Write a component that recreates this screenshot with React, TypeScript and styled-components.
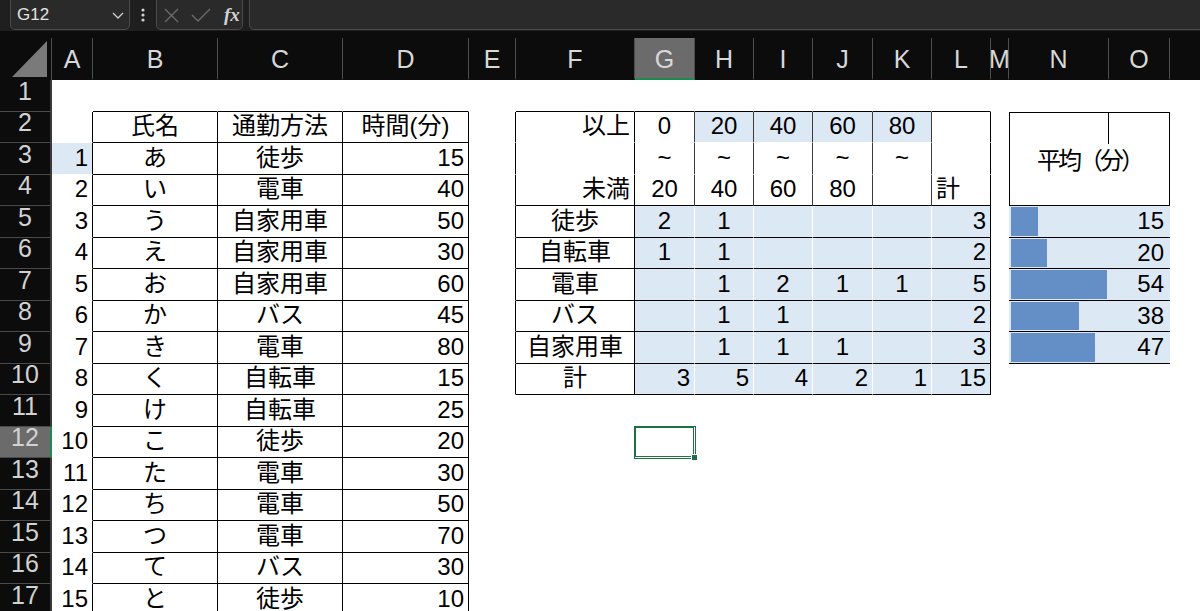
import React from 'react';
import styled, { createGlobalStyle } from 'styled-components';

type Align = 'left' | 'center' | 'right';

type CellSpec = {
    text?: string;
    align?: Align;
    fill?: boolean;
    right?: string;
    bottom?: string;
    selected?: boolean;
};

const FILL = '#dde8f5';
const BAR = '#638ec6';
const GREEN = '#1d7044';
const LINE = '#000';
const SOFT_LINE = '#3c3c3c';
const ROW_H = 31.5;

// P列は画面の右端で切れていて文字は見えない
const COLS = ['A', 'B', 'C', 'D', 'E', 'F', 'G', 'H', 'I', 'J', 'K', 'L', 'M', 'N', 'O', 'P'];
const WIDTHS = [41, 125, 125, 126, 47, 119, 60, 59, 59, 60, 59, 59, 18, 100, 61, 110];
const ROWS = Array.from({ length: 17 }, (_, i) => i + 1);

const names = ['あ', 'い', 'う', 'え', 'お', 'か', 'き', 'く', 'け', 'こ', 'た', 'ち', 'つ', 'て', 'と'];
const methods = ['徒歩', '電車', '自家用車', '自家用車', '自家用車', 'バス', '電車', '自転車', '自転車', '徒歩', '電車', '電車', '電車', 'バス', '徒歩'];
const times = [15, 40, 50, 30, 60, 45, 80, 15, 25, 20, 30, 50, 70, 30, 10];

const crossRows: { label: string; values: (number | null)[]; total: number }[] = [
    { label: '徒歩', values: [2, 1, null, null, null], total: 3 },
    { label: '自転車', values: [1, 1, null, null, null], total: 2 },
    { label: '電車', values: [null, 1, 2, 1, 1], total: 5 },
    { label: 'バス', values: [null, 1, 1, null, null], total: 2 },
    { label: '自家用車', values: [null, 1, 1, 1, null], total: 3 },
];
const colTotals = [3, 5, 4, 2, 1];
const averages = [15, 20, 54, 38, 47];

function buildCells() {
    const cells: Record<string, CellSpec> = {};
    const set = (key: string, spec: CellSpec) => {
        cells[key] = { ...cells[key], ...spec };
    };

    // 左の表
    ['B', 'C', 'D'].forEach(c => set(c + '1', { bottom: LINE }));
    for (let r = 2; r <= 17; r++) {
        set('A' + r, { right: LINE });
        ['B', 'C', 'D'].forEach(c => set(c + r, { right: LINE, bottom: LINE }));
    }
    set('B2', { text: '氏名', align: 'center' });
    set('C2', { text: '通勤方法', align: 'center' });
    set('D2', { text: '時間(分)', align: 'center' });
    names.forEach((n, i) => {
        const r = i + 3;
        set('A' + r, { text: String(i + 1), align: 'right' });
        set('B' + r, { text: n, align: 'center' });
        set('C' + r, { text: methods[i], align: 'center' });
        set('D' + r, { text: String(times[i]), align: 'right' });
    });
    set('A3', { fill: true });

    // 度数分布表
    const mid = ['F', 'G', 'H', 'I', 'J', 'K', 'L'];
    const bins = ['G', 'H', 'I', 'J', 'K'];
    mid.forEach(c => set(c + '1', { bottom: LINE }));
    for (let r = 2; r <= 10; r++) {
        set('E' + r, { right: LINE });
        set('F' + r, { right: LINE });
        set('L' + r, { right: LINE });
    }
    for (let r = 2; r <= 4; r++) bins.forEach(c => set(c + r, { right: SOFT_LINE }));
    mid.forEach(c => set(c + '4', { bottom: LINE }));
    set('F2', { text: '以上', align: 'right' });
    set('F4', { text: '未満', align: 'right' });
    ['0', '20', '40', '60', '80'].forEach((t, i) => set(bins[i] + '2', { text: t, align: 'center', fill: i > 0 }));
    bins.forEach(c => set(c + '3', { text: '~', align: 'center' }));
    ['20', '40', '60', '80'].forEach((t, i) => set(bins[i] + '4', { text: t, align: 'center' }));
    set('L4', { text: '計', align: 'left' });

    crossRows.forEach((row, i) => {
        const r = i + 5;
        mid.forEach(c => set(c + r, { bottom: LINE, fill: c !== 'F' }));
        set('F' + r, { text: row.label, align: 'center' });
        row.values.forEach((v, j) => {
            if (v !== null) set(bins[j] + r, { text: String(v), align: 'center' });
        });
        set('L' + r, { text: String(row.total), align: 'right' });
    });
    mid.forEach(c => set(c + '10', { bottom: LINE, fill: c !== 'F' }));
    set('F10', { text: '計', align: 'center' });
    colTotals.forEach((v, j) => set(bins[j] + '10', { text: String(v), align: 'right' }));
    set('L10', { text: '15', align: 'right' });

    set('G12', { selected: true });
    return cells;
}

const CELLS = buildCells();

const GlobalStyle = createGlobalStyle`
    html, body {
        margin: 0;
        padding: 0;
        background: #fff;
        overflow: hidden;
    }
    body {
        font-family: "Liberation Sans", "Noto Sans CJK JP", sans-serif;
    }
`;

const Page = styled.div`
    width: 1200px;
    height: 611px;
    overflow: hidden;
`;

const TopBar = styled.div`
    height: 31px;
    display: flex;
    align-items: flex-start;
    background: #1f1f1f;
    padding-left: 10px;
    overflow: hidden;
`;

const Box = styled.div`
    box-sizing: border-box;
    height: 35px;
    margin-top: -5px;
    padding-top: 5px;
    background: #2a2a2a;
    border: 1px solid #4a4a4a;
    border-radius: 0 0 5px 5px;
    display: flex;
    align-items: center;
`;

const NameBox = styled(Box)`
    width: 120px;
    justify-content: space-between;
    padding-left: 6px;
    padding-right: 5px;
    color: #e4e4e4;
    font-size: 17px;
`;

const Dots = styled.div`
    width: 26px;
    height: 30px;
    display: flex;
    align-items: center;
    justify-content: center;
`;

const FxBox = styled(Box)`
    width: 87px;
    padding-left: 7px;
    gap: 12px;
`;

const FxLabel = styled.span`
    font-family: "Liberation Serif", serif;
    font-style: italic;
    font-weight: bold;
    font-size: 19px;
    color: #d2d2d2;
    margin-left: 1px;
`;

const FormulaBox = styled(Box)`
    flex: 1;
    margin-left: 6px;
    margin-right: -10px;
`;

const Sheet = styled.div`
    display: grid;
    grid-template-columns: 52px ${WIDTHS.map(w => w + 'px').join(' ')};
    grid-template-rows: 42px repeat(17, ${ROW_H}px);
    background: #0c0c0c;
    padding-top: 7px;
`;

const Corner = styled.div`
    box-sizing: border-box;
    border-right: 1px solid #4e4e4e;
    display: flex;
    align-items: flex-end;
    justify-content: flex-end;
    padding: 0 4px 3px 0;
`;

const ColHead = styled.div<{ $active?: boolean }>`
    box-sizing: border-box;
    display: flex;
    align-items: center;
    justify-content: center;
    overflow: hidden;
    background: ${p => (p.$active ? '#6b6b6b' : '#0c0c0c')};
    border-right: 1px solid #4e4e4e;
    border-bottom: 2px solid ${p => (p.$active ? '#1f8a50' : '#0c0c0c')};
    color: #d8d8d8;
    font-size: 25px;
    padding-top: 2px;
`;

const RowHead = styled.div<{ $active?: boolean }>`
    box-sizing: border-box;
    display: flex;
    align-items: center;
    justify-content: center;
    padding-bottom: 8px;
    background: ${p => (p.$active ? '#6b6b6b' : '#0c0c0c')};
    border-bottom: 1px solid #4a4a4a;
    border-right: 2px solid ${p => (p.$active ? '#1f8a50' : '#3a3a3a')};
    color: #d2d2d2;
    font-size: 25px;
`;

const Cell = styled.div<{ $align: Align; $fill: boolean; $right?: string; $bottom?: string; $selected?: boolean }>`
    position: relative;
    box-sizing: border-box;
    display: flex;
    align-items: center;
    justify-content: ${p => (p.$align === 'left' ? 'flex-start' : p.$align === 'right' ? 'flex-end' : 'center')};
    padding: 0 4px 1px;
    background: ${p => (p.$fill ? FILL : '#fff')};
    border-right: 1px solid ${p => p.$right ?? (p.$fill ? '#fff' : 'transparent')};
    border-bottom: 1px solid ${p => p.$bottom ?? (p.$fill ? '#fff' : 'transparent')};
    font-size: 24px;
    line-height: 1;
    color: #000;
    white-space: nowrap;
    z-index: ${p => (p.$selected ? 2 : 'auto')};
    box-shadow: ${p => (p.$selected ? `inset 0 0 0 1px ${GREEN}, 0 0 0 1px ${GREEN}` : 'none')};

    ${p =>
        p.$selected &&
        `
        &::after {
            content: '';
            position: absolute;
            right: -4px;
            bottom: -4px;
            width: 5px;
            height: 5px;
            background: ${GREEN};
            border: 1px solid #fff;
        }
    `}
`;

const AverageHead = styled.div`
    grid-column: 15 / 17;
    grid-row: 3 / 6;
    position: relative;
    box-sizing: border-box;
    border: 1px solid ${LINE};
    background: #fff;
    display: flex;
    align-items: center;
    justify-content: center;
    font-size: 24px;
    letter-spacing: -3px;

    &::before {
        content: '';
        position: absolute;
        left: 98px;
        top: 0;
        width: 1px;
        height: ${ROW_H}px;
        background: ${LINE};
    }
`;

const BarCell = styled.div<{ $row: number }>`
    grid-column: 15 / 17;
    grid-row: ${p => p.$row + 1};
    box-sizing: border-box;
    display: grid;
    padding: 1px 6px 1px 2px;
    background: ${FILL};
    border-bottom: 1px solid ${LINE};
    font-size: 24px;
    line-height: 1;
`;

const Bar = styled.div`
    grid-area: 1 / 1;
    justify-self: start;
    height: 100%;
    background: ${BAR};
`;

const BarValue = styled.div`
    grid-area: 1 / 1;
    justify-self: end;
    align-self: center;
`;

function Chevron() {
    return (
        <svg width="12" height="7" viewBox="0 0 12 7">
            <polyline points="1,1 6,6 11,1" fill="none" stroke="#cfcfcf" strokeWidth="1.3" />
        </svg>
    );
}

function FormulaIcons() {
    return (
        <>
            <svg width="15" height="15" viewBox="0 0 15 15">
                <path d="M1 1 L14 14 M14 1 L1 14" stroke="#6c6c6c" strokeWidth="1.3" />
            </svg>
            <svg width="20" height="14" viewBox="0 0 20 14">
                <polyline points="1,7 7,13 19,1" fill="none" stroke="#6c6c6c" strokeWidth="1.3" />
            </svg>
            <FxLabel>fx</FxLabel>
        </>
    );
}

function App() {
    return (
        <Page>
            <GlobalStyle />
            <TopBar>
                <NameBox>
                    <span>G12</span>
                    <Chevron />
                </NameBox>
                <Dots>
                    <svg width="4" height="14" viewBox="0 0 4 14">
                        <circle cx="2" cy="2" r="1.6" fill="#d0d0d0" />
                        <circle cx="2" cy="7" r="1.6" fill="#d0d0d0" />
                        <circle cx="2" cy="12" r="1.6" fill="#d0d0d0" />
                    </svg>
                </Dots>
                <FxBox>
                    <FormulaIcons />
                </FxBox>
                <FormulaBox />
            </TopBar>
            <Sheet>
                <Corner>
                    <svg width="35" height="36" viewBox="0 0 35 36">
                        <polygon points="0,36 35,36 35,0" fill="#7a7a7a" />
                    </svg>
                </Corner>
                {COLS.map(c => (
                    <ColHead key={c} $active={c === 'G'}>
                        {c === 'P' ? null : c}
                    </ColHead>
                ))}
                {ROWS.map(r => (
                    <React.Fragment key={r}>
                        <RowHead $active={r === 12}>{r}</RowHead>
                        {COLS.map(c => {
                            if ((c === 'N' || c === 'O') && r >= 2 && r <= 9) return null;
                            const spec = CELLS[c + r] ?? {};
                            return (
                                <Cell
                                    key={c + r}
                                    $align={spec.align ?? 'left'}
                                    $fill={!!spec.fill}
                                    $right={spec.right}
                                    $bottom={spec.bottom}
                                    $selected={spec.selected}
                                >
                                    {spec.text}
                                </Cell>
                            );
                        })}
                    </React.Fragment>
                ))}
                <AverageHead>平均（分）</AverageHead>
                {averages.map((v, i) => (
                    <BarCell key={i} $row={i + 5}>
                        <Bar style={{ width: v * 1.78 }} />
                        <BarValue>{v}</BarValue>
                    </BarCell>
                ))}
            </Sheet>
        </Page>
    );
}

export default App;
